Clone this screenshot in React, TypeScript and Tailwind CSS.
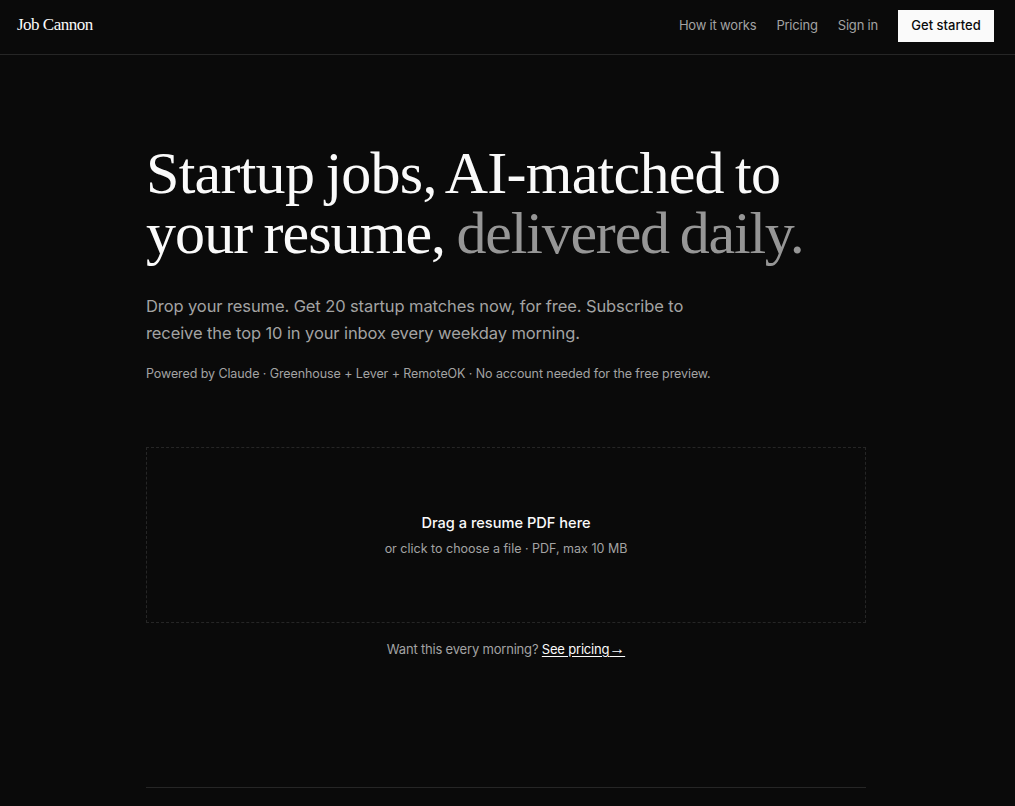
export default function App() {
  return (
    <div className="h-[806px] overflow-hidden bg-[#0a0a0a] font-['Inter',sans-serif] text-white">
      <header className="h-[55px] border-b border-[#262626] flex items-center justify-between pl-[17px] pr-[21px] pb-[2px]">
        <span className="font-['Liberation_Serif',serif] text-[17px] tracking-[-0.5px] text-[#fafafa] -mt-[2px]">Job Cannon</span>
        <nav className="flex items-center gap-5 text-[13px] tracking-[-0.2px] text-[#a3a3a3]">
          <a>How it works</a>
          <a>Pricing</a>
          <a>Sign in</a>
          <a className="bg-[#fafafa] text-[#0a0a0a] h-8 w-24 flex items-center justify-center font-medium tracking-normal">Get started</a>
        </nav>
      </header>
      <main className="w-[720px] ml-[146px]">
        <h1 className="mt-[88px] font-['Liberation_Serif',serif] text-[60px] leading-[60px] tracking-[-0.74px] [word-spacing:-3px] text-[#fafafa]">
          Startup jobs, AI-matched to<br /><span className="tracking-[-0.92px]">your resume,</span> <span className="text-[#969696] tracking-[-1.2px]">delivered daily.</span>
        </h1>
        <p className="mt-[30px] text-[16.5px] tracking-[-0.1px] leading-[27px] text-[#a3a3a3] max-w-[560px]">
          Drop your resume. Get 20 startup matches now, for free. Subscribe to receive the top 10 in your inbox every weekday morning.
        </p>
        <p className="mt-[17px] text-[12.5px] tracking-[-0.09px] leading-5 text-[#a3a3a3]">
          Powered by Claude · Greenhouse + Lever + RemoteOK · No account needed for the free preview.
        </p>
        <div className="mt-[63px] h-[176px] border border-dashed border-[#262626] flex flex-col items-center justify-center">
          <div className="text-[14.6px] font-medium text-[#fafafa] leading-5">Drag a resume PDF here</div>
          <div className="mt-[6px] pt-px text-[12.5px] leading-[18px] text-[#a3a3a3]">or click to choose a file · PDF, max 10 MB</div>
        </div>
        <p className="mt-4 text-center text-[13px] tracking-[-0.19px] leading-5 text-[#a3a3a3]">
          Want this every morning? <a className="text-[#fafafa] underline underline-offset-2">See pricing<span className="font-['Liberation_Sans',sans-serif] text-[16px] leading-none">→</span></a>
        </p>
        <div className="mt-[128px] border-t border-[#262626]" />
      </main>
    </div>
  );
}
